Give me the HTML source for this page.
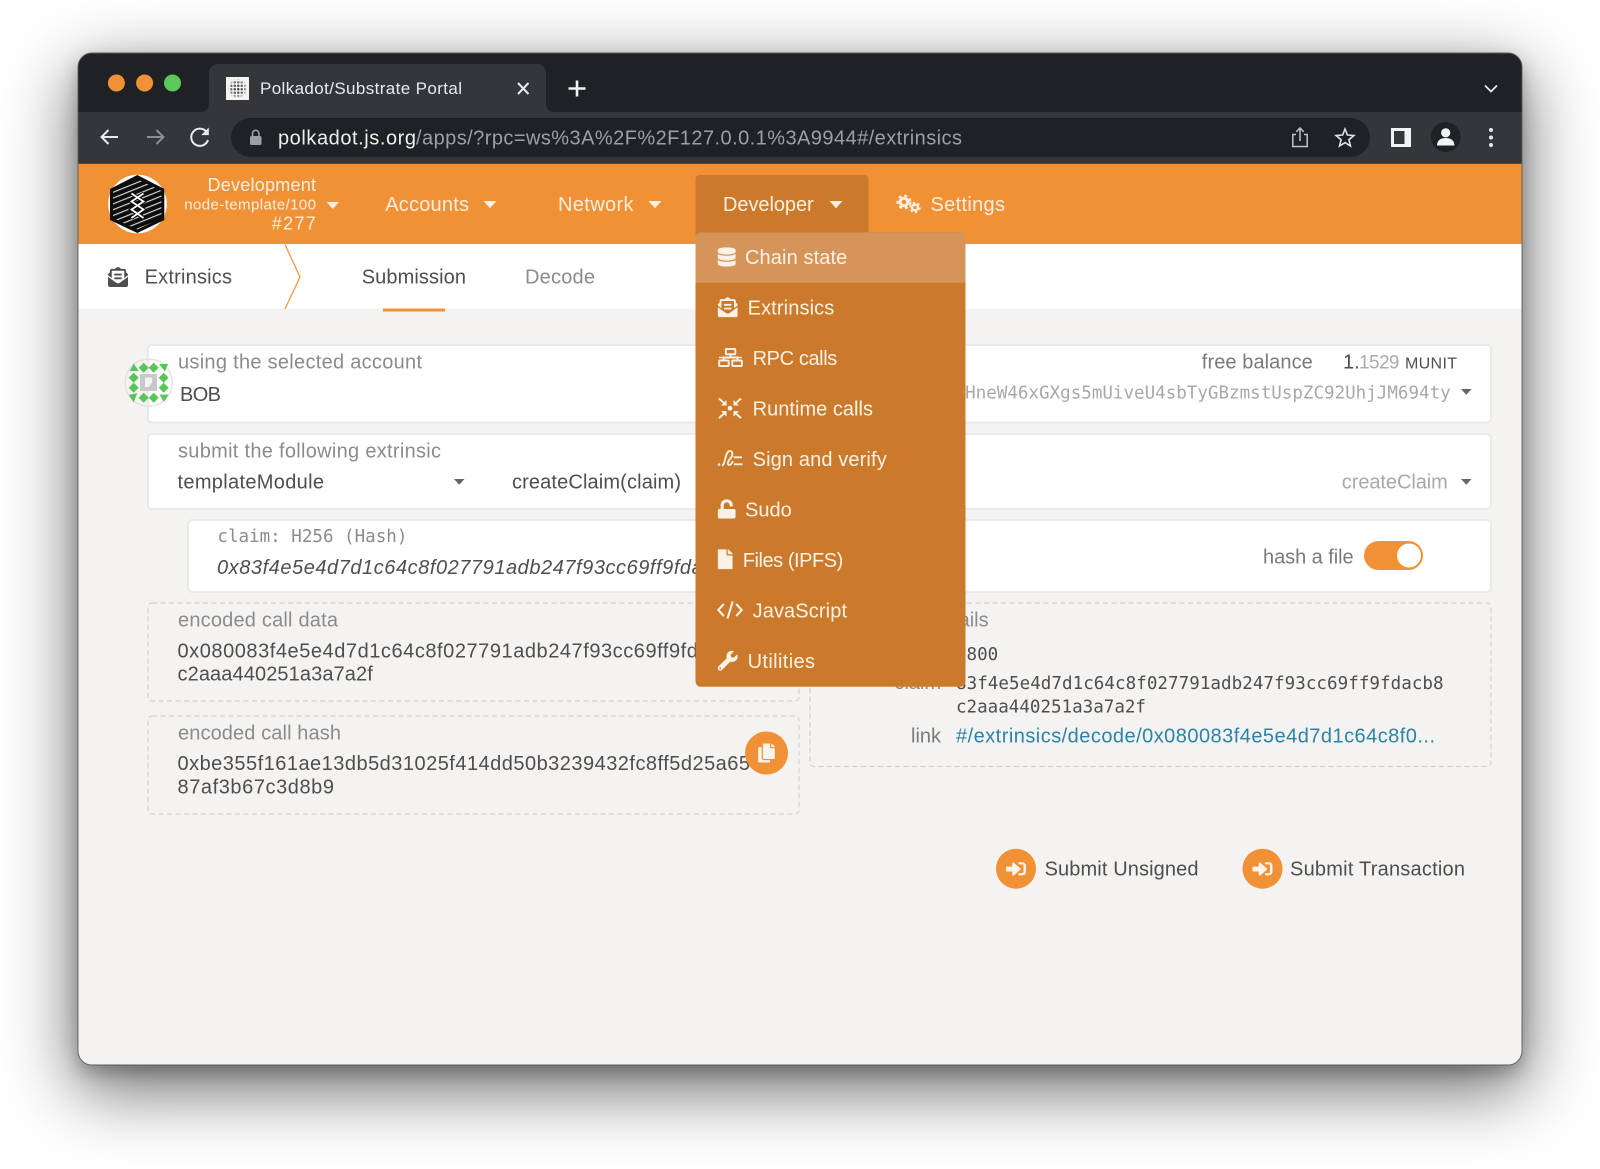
<!DOCTYPE html>
<html lang="en">
<head>
<meta charset="utf-8">
<title>Polkadot/Substrate Portal</title>
<style>
html,body{margin:0;padding:0;background:#fff;width:1600px;height:1169px;overflow:hidden}
#win{position:absolute;left:78px;top:53px;width:1444px;height:1012px;border-radius:14px;background:#f4f3f2;box-shadow:0 22px 70px 4px rgba(0,0,0,.56),0 8px 18px rgba(0,0,0,.25)}
svg#page{position:absolute;left:0;top:0;display:block}
text{font-family:"Liberation Sans",sans-serif;font-size:20px;fill:#4e4e4e}
.l{fill:#8b8b8b}
.m{font-family:"DejaVu Sans Mono",monospace;font-size:17.55px}
.h{fill:#fbeee0}
.w{fill:#fbf1e6}
</style>
</head>
<body>
<div id="win"></div>
<svg id="page" width="1600" height="1169" viewBox="0 0 1600 1169" xmlns="http://www.w3.org/2000/svg">
<defs>
<clipPath id="wc"><rect x="78" y="53" width="1444" height="1012" rx="14"/></clipPath>
<clipPath id="hex"><path d="M137.300 179L161.500 191V218L137.300 229.500L113 218V191Z"/></clipPath>
<clipPath id="mc"><rect x="695.500" y="232.300" width="270" height="454.400" rx="5"/></clipPath>
<pattern id="dots" width="3.500" height="3.500" patternUnits="userSpaceOnUse" x="226" y="77"><circle cx="1.750" cy="1.750" r="1.250" fill="#333"/></pattern>
<radialGradient id="fade" gradientUnits="userSpaceOnUse" cx="237.500" cy="88.500" r="10"><stop offset="0" stop-color="#f4f4f4" stop-opacity="0"/><stop offset=".7" stop-color="#f4f4f4" stop-opacity=".35"/><stop offset="1" stop-color="#f4f4f4" stop-opacity="1"/></radialGradient>
<pattern id="stripes" width="12" height="5.400" patternUnits="userSpaceOnUse" patternTransform="rotate(-22 137 204)"><rect width="12" height="1.150" fill="#d8d8d8"/></pattern>
</defs>

<g clip-path="url(#wc)">
<rect x="78" y="53" width="1444" height="59" fill="#202124"/>
<rect x="78" y="112" width="1444" height="51" fill="#35363a"/>
<rect x="78" y="163" width="1444" height="1" fill="#4a4b4e"/>
<rect x="78" y="164" width="1444" height="80" fill="#f19135"/>
<rect x="78" y="244" width="1444" height="65" fill="#fff"/>
<rect x="78" y="309" width="1444" height="756" fill="#f4f3f2"/>
</g>
<rect x="78" y="53" width="1444" height="1012" rx="14" fill="none" stroke="#5c5c5c" stroke-width=".9"/>

<!-- traffic lights -->
<circle cx="116.400" cy="83" r="8.500" fill="#f19135"/>
<circle cx="144.600" cy="83" r="8.500" fill="#f19135"/>
<circle cx="172.500" cy="83" r="8.500" fill="#5ac85a"/>

<!-- tab -->
<path d="M200 112c6 0 9-3 9-9V73c0-5 4-9 9-9h319c5 0 9 4 9 9v30c0 6 3 9 9 9z" fill="#35363a"/>
<rect x="226" y="77" width="23" height="23" fill="#f4f4f4"/>
<rect x="227.500" y="78.500" width="20" height="20" fill="url(#dots)"/>
<rect x="226" y="77" width="23" height="23" fill="url(#fade)"/>
<text x="260" y="94" style="font-size:17px;fill:#e8eaed" textLength="202">Polkadot/Substrate Portal</text>
<path d="M518 83l10.500 11M528.500 83L518 94" stroke="#e8eaed" stroke-width="2" fill="none"/>
<path d="M577 80.500v16M568.500 88.500h17" stroke="#f1f3f4" stroke-width="2.600" fill="none"/>
<path d="M1485 85.500l6 6 6-6" stroke="#e8eaed" stroke-width="1.800" fill="none"/>

<!-- toolbar -->
<path d="M118 137H102M108.500 130l-7 7 7 7" stroke="#e8eaed" stroke-width="2" fill="none"/>
<path d="M163 137H147M156.500 130l7 7-7 7" stroke="#8a8d91" stroke-width="2" fill="none"/>
<path d="M206.500 131.800A8.600 8.600 0 1 0 208 140" stroke="#e8eaed" stroke-width="2" fill="none"/>
<path d="M208.800 127.500v7.600h-7.600z" fill="#e8eaed"/>
<rect x="231" y="118" width="1139" height="39" rx="19.500" fill="#202124"/>
<rect x="250" y="136" width="11.500" height="9" rx="1.500" fill="#9aa0a6"/>
<path d="M252.500 136v-2.500a3.200 3.200 0 0 1 6.400 0V136" stroke="#9aa0a6" stroke-width="1.600" fill="none"/>
<text x="278" y="144.500" style="fill:#eceef0" textLength="138">polkadot.js.org</text>
<text x="416" y="144.500" style="fill:#9aa0a6" textLength="546">/apps/?rpc=ws%3A%2F%2F127.0.0.1%3A9944#/extrinsics</text>
<path d="M1296 134.500h-3.200v12h14.400v-12H1304M1300 141v-12.500M1296.300 131.800l3.700-3.800 3.700 3.800" stroke="#bdc1c6" stroke-width="1.500" fill="none"/>
<path d="M1345 129l2.400 6 6.500.5-5 4.200 1.600 6.300-5.500-3.400-5.500 3.400 1.600-6.300-5-4.200 6.500-.5z" stroke="#dfe1e5" stroke-width="1.600" fill="none"/>
<rect x="1391" y="128" width="20" height="19" fill="#f1f3f4"/>
<rect x="1394" y="131" width="10.500" height="13" fill="#35363a"/>
<circle cx="1445.700" cy="137" r="15" fill="#202124"/>
<circle cx="1445.700" cy="132.800" r="4.600" fill="#f1f3f4"/>
<path d="M1437 145.500c0-5 3.500-7.500 8.700-7.500s8.700 2.500 8.700 7.500z" fill="#f1f3f4"/>
<circle cx="1491" cy="130" r="2" fill="#e8eaed"/><circle cx="1491" cy="137.500" r="2" fill="#e8eaed"/><circle cx="1491" cy="145" r="2" fill="#e8eaed"/>

<!-- logo -->
<circle cx="137.500" cy="204" r="29.300" fill="#fff"/>
<path d="M137.300 175L164.300 189V220L137.300 233L110 220V189Z" fill="#0d0d0d"/>
<rect x="105" y="170" width="65" height="68" fill="url(#stripes)" clip-path="url(#hex)"/>
<path d="M131.500 193.500L143.500 201.500 131.500 209.500 143.500 218M143.500 193.500L131.500 201.500 143.500 209.500 131.500 218" stroke="#0d0d0d" stroke-width="4" fill="none"/>
<path d="M131.500 193.500L143.500 201.500 131.500 209.500 143.500 218M143.500 193.500L131.500 201.500 143.500 209.500 131.500 218" stroke="#fff" stroke-width="1.800" fill="none"/>

<!-- header -->
<text class="h" x="207.500" y="191" style="font-size:18px" textLength="108.500">Development</text>
<text class="h" x="184.300" y="209.300" style="font-size:15px" textLength="131.700">node-template/100</text>
<text class="h" x="271.800" y="229.300" style="font-size:18px" textLength="44">#277</text>
<path d="M326.500 202h12.500l-6.200 7z" fill="#fbeee0"/>
<text class="h" x="385.200" y="211" textLength="83.800">Accounts</text>
<path d="M483.500 201h13l-6.500 7.300z" fill="#fbeee0"/>
<text class="h" x="558" y="211" textLength="75.500">Network</text>
<path d="M648.500 201h13l-6.500 7.300z" fill="#fbeee0"/>
<path d="M695.500 244V179a4 4 0 0 1 4-4h165a4 4 0 0 1 4 4V244z" fill="#cb7a2b"/>
<text class="h" x="723" y="211" textLength="90.700">Developer</text>
<path d="M829.500 201h13l-6.500 7.300z" fill="#fbeee0"/>
<g fill="none" stroke="#fbeee0">
<circle cx="904" cy="202" r="3.800" stroke-width="3"/>
<circle cx="904" cy="202" r="6.300" stroke-width="2.400" stroke-dasharray="3 2.950"/>
<circle cx="915" cy="207.500" r="2.900" stroke-width="2.400"/>
<circle cx="915" cy="207.500" r="4.700" stroke-width="2" stroke-dasharray="2.400 2.520"/>
</g>
<text class="h" x="930.500" y="211" textLength="74.500">Settings</text>

<!-- sub nav -->
<svg x="108" y="267" width="20" height="20" viewBox="0 0 512 512"><path fill="#4e4e4e" d="M176 216h160c8.840 0 16-7.160 16-16v-16c0-8.840-7.160-16-16-16H176c-8.840 0-16 7.160-16 16v16c0 8.840 7.160 16 16 16zm-16 80c0 8.840 7.160 16 16 16h160c8.840 0 16-7.160 16-16v-16c0-8.840-7.160-16-16-16H176c-8.840 0-16 7.160-16 16v16zm96 121.130c-16.420 0-32.840-5.060-46.860-15.190L0 250.860V464c0 26.510 21.490 48 48 48h416c26.510 0 48-21.490 48-48V250.860L302.860 401.940c-14.020 10.120-30.440 15.190-46.860 15.190zm237.610-254.180c-8.850-6.940-17.240-13.470-29.610-22.810V96c0-26.510-21.490-48-48-48h-77.550c-3.040-2.200-5.870-4.260-9.040-6.560C312.600 29.170 279.200-.35 256 0c-23.200-.35-56.590 29.170-73.410 41.440-3.170 2.300-6 4.360-9.040 6.560H96c-26.510 0-48 21.490-48 48v44.140c-12.370 9.330-20.760 15.870-29.610 22.810A47.995 47.995 0 0 0 0 200.720v10.650l96 69.350V96h320v184.720l96-69.350v-10.650c0-14.740-6.780-28.670-18.390-37.770z"/></svg>
<text x="144.600" y="283.500" textLength="87.400">Extrinsics</text>
<path d="M285 244.500L300 277 285 309" fill="none" stroke="#f19135" stroke-width="1.200"/>
<text x="361.700" y="283.500" textLength="104.300">Submission</text>
<text class="l" x="525" y="283.500" textLength="70">Decode</text>
<rect x="383" y="308.500" width="62" height="3" fill="#f19135"/>

<!-- cards -->
<g fill="#fff" stroke="#e8e8e7" stroke-width="1.800">
<rect x="148" y="345" width="1343" height="77.500" rx="4"/>
<rect x="148" y="434" width="1343" height="75" rx="4"/>
<rect x="188" y="520" width="1303" height="72" rx="4"/>
</g>
<g fill="none" stroke="#d2d2d2" stroke-width="1.200" stroke-dasharray="5 3.500">
<rect x="148" y="603" width="651" height="98" rx="4"/>
<rect x="148" y="716" width="651" height="98" rx="4"/>
<rect x="810" y="603" width="681" height="163.500" rx="4"/>
</g>

<!-- identicon -->
<circle cx="148.700" cy="382.700" r="23.500" fill="none" stroke="#e0e0e0" stroke-width="1.300"/>
<rect x="140" y="374" width="17" height="17" fill="#c9c9c9"/>
<path d="M145 377.500h7v5l-3 4.500h-4z" fill="#f4f4f4"/>
<path fill="#58c558" d="M143.700 362.700l5 5-5 5-5-5zM153.700 362.700l5 5-5 5-5-5zM143.700 392.700l5 5-5 5-5-5zM153.700 392.700l5 5-5 5-5-5zM133.700 372.700l5 5-5 5-5-5zM133.700 382.700l5 5-5 5-5-5zM163.700 372.700l5 5-5 5-5-5zM163.700 382.700l5 5-5 5-5-5zM133.700 363.500l5 7.500h-9zM159 364h9l-3 7.500zM133.700 402.500l-5-7.500 8.500-2zM164 402l4.500-7.500h-9z"/>

<!-- left content -->
<text class="l" x="178" y="368.500" textLength="244">using the selected account</text>
<text x="180" y="401" textLength="41">BOB</text>
<text class="l" x="178" y="457.500" textLength="263">submit the following extrinsic</text>
<text x="177.500" y="488.300" textLength="146.500">templateModule</text>
<path d="M454 479h10.500l-5.200 5.800z" fill="#666"/>
<text x="512" y="488.300" textLength="169">createClaim(claim)</text>
<text class="l m" x="217.400" y="542">claim: H256 (Hash)</text>
<text x="217" y="573.800" font-style="italic" style="letter-spacing:.55px">0x83f4e5e4d7d1c64c8f027791adb247f93cc69ff9fdacb8c2aaa440251a3a7a2f</text>
<text class="l" x="178" y="626.700" textLength="160">encoded call data</text>
<text x="177.500" y="657.700" style="letter-spacing:.55px">0x080083f4e5e4d7d1c64c8f027791adb247f93cc69ff9fdacb8</text>
<text x="177.500" y="680.700" textLength="195.300">c2aaa440251a3a7a2f</text>
<text class="l" x="178" y="739.300" textLength="163">encoded call hash</text>
<text x="177.500" y="770" textLength="572.500">0xbe355f161ae13db5d31025f414dd50b3239432fc8ff5d25a65</text>
<text x="177.500" y="793.300" textLength="156.500">87af3b67c3d8b9</text>

<!-- copy button -->
<circle cx="766.500" cy="753" r="21.500" fill="#f19135"/>
<svg x="758" y="743.500" width="17" height="19" viewBox="0 0 448 512"><path fill="#f8f4ee" d="M320 448v40c0 13.255-10.745 24-24 24H24c-13.255 0-24-10.745-24-24V120c0-13.255 10.745-24 24-24h72v296c0 30.879 25.121 56 56 56h168zm0-344V0H152c-13.255 0-24 10.745-24 24v368c0 13.255 10.745 24 24 24h272c13.255 0 24-10.745 24-24V128H344c-13.200 0-24-10.800-24-24zm120.971-31.029L375.029 7.029A24 24 0 0 0 358.059 0H352v96h96v-6.059a24 24 0 0 0-7.029-16.970z"/></svg>

<!-- right content -->
<text x="1201.800" y="368.500" style="fill:#7a7a7a" textLength="111">free balance</text>
<text x="1343" y="368.500">1.</text>
<text x="1359" y="368.500" style="fill:#ababab;font-size:19px" textLength="40.500">1529</text>
<text x="1405" y="368.500" style="font-size:16px" textLength="52">MUNIT</text>
<text class="m" x="1450.700" y="398.300" text-anchor="end" style="fill:#a8a8a8">5FHneW46xGXgs5mUiveU4sbTyGBzmstUspZC92UhjJM694ty</text>
<path d="M1461 389h10.500l-5.200 5.800z" fill="#666"/>
<text x="1341.800" y="488.300" style="fill:#a8a8a8" textLength="106">createClaim</text>
<path d="M1461 479h10.500l-5.200 5.800z" fill="#666"/>
<text x="1263" y="563.300" style="fill:#7a7a7a" textLength="90.600">hash a file</text>
<rect x="1364" y="541" width="59" height="29" rx="14.500" fill="#f19135"/>
<circle cx="1409" cy="555.500" r="12" fill="#fff"/>
<text class="l" x="988.600" y="626.700" text-anchor="end">call details</text>
<text class="m" x="956" y="660">0800</text>
<text class="l" x="941" y="689" text-anchor="end">claim</text>
<text class="m" x="956" y="689" textLength="487.600">83f4e5e4d7d1c64c8f027791adb247f93cc69ff9fdacb8</text>
<text class="m" x="956" y="712.300">c2aaa440251a3a7a2f</text>
<text x="911" y="742.300" style="fill:#7a7a7a" textLength="30">link</text>
<text x="956" y="742.300" style="fill:#2b83a8" textLength="479">#/extrinsics/decode/0x080083f4e5e4d7d1c64c8f0...</text>

<!-- submit buttons -->
<circle cx="1016" cy="868.700" r="20" fill="#f19135"/>
<svg x="1006" y="860" width="20" height="17.500" viewBox="0 0 512 512" preserveAspectRatio="none"><path fill="#f8f4ee" d="M416 448h-84c-6.600 0-12-5.400-12-12v-40c0-6.600 5.400-12 12-12h84c17.700 0 32-14.300 32-32V160c0-17.700-14.300-32-32-32h-84c-6.600 0-12-5.400-12-12V76c0-6.600 5.400-12 12-12h84c53 0 96 43 96 96v192c0 53-43 96-96 96zm-47-201L201 79c-15-15-41-4.500-41 17v96H24c-13.300 0-24 10.700-24 24v96c0 13.300 10.700 24 24 24h136v96c0 21.500 26 32 41 17l168-168c9.300-9.400 9.300-24.600 0-34z"/></svg>
<text x="1044.600" y="875.300" textLength="153.900">Submit Unsigned</text>
<circle cx="1262.500" cy="868.700" r="20" fill="#f19135"/>
<svg x="1252.500" y="860" width="20" height="17.500" viewBox="0 0 512 512" preserveAspectRatio="none"><path fill="#f8f4ee" d="M416 448h-84c-6.600 0-12-5.400-12-12v-40c0-6.600 5.400-12 12-12h84c17.700 0 32-14.300 32-32V160c0-17.700-14.300-32-32-32h-84c-6.600 0-12-5.400-12-12V76c0-6.600 5.400-12 12-12h84c53 0 96 43 96 96v192c0 53-43 96-96 96zm-47-201L201 79c-15-15-41-4.500-41 17v96H24c-13.300 0-24 10.700-24 24v96c0 13.300 10.700 24 24 24h136v96c0 21.500 26 32 41 17l168-168c9.300-9.400 9.300-24.600 0-34z"/></svg>
<text x="1290" y="875.300" textLength="175">Submit Transaction</text>

<!-- dropdown -->
<rect x="695.500" y="232.300" width="270" height="454.400" rx="5" fill="#cb7a2b"/>
<rect x="695.500" y="232.300" width="270" height="50.400" fill="#d5955a" clip-path="url(#mc)"/>

<svg x="717.700" y="247.300" width="18" height="19.300" viewBox="0 0 448 512" preserveAspectRatio="none"><path fill="#fbf1e6" d="M448 73.143v45.714C448 159.143 347.667 192 224 192S0 159.143 0 118.857V73.143C0 32.857 100.333 0 224 0s224 32.857 224 73.143zM448 176v102.857C448 319.143 347.667 352 224 352S0 319.143 0 278.857V176c48.125 33.143 136.208 48.572 224 48.572S399.874 209.143 448 176zm0 160v102.857C448 479.143 347.667 512 224 512S0 479.143 0 438.857V336c48.125 33.143 136.208 48.572 224 48.572S399.874 369.143 448 336z"/></svg>
<text class="w" x="745" y="264" textLength="102.300">Chain state</text>

<svg x="717.700" y="297.300" width="20" height="20" viewBox="0 0 512 512"><path fill="#fbf1e6" d="M176 216h160c8.840 0 16-7.160 16-16v-16c0-8.840-7.160-16-16-16H176c-8.840 0-16 7.160-16 16v16c0 8.840 7.160 16 16 16zm-16 80c0 8.840 7.160 16 16 16h160c8.840 0 16-7.160 16-16v-16c0-8.840-7.160-16-16-16H176c-8.840 0-16 7.160-16 16v16zm96 121.130c-16.420 0-32.840-5.060-46.860-15.190L0 250.860V464c0 26.510 21.490 48 48 48h416c26.510 0 48-21.490 48-48V250.860L302.860 401.940c-14.020 10.120-30.440 15.190-46.860 15.190zm237.610-254.180c-8.850-6.940-17.240-13.470-29.610-22.810V96c0-26.510-21.490-48-48-48h-77.550c-3.040-2.200-5.870-4.260-9.040-6.560C312.600 29.170 279.200-.35 256 0c-23.200-.35-56.590 29.170-73.410 41.440-3.170 2.300-6 4.360-9.040 6.560H96c-26.510 0-48 21.490-48 48v44.140c-12.370 9.330-20.760 15.870-29.610 22.810A47.995 47.995 0 0 0 0 200.720v10.650l96 69.350V96h320v184.720l96-69.350v-10.650c0-14.740-6.780-28.670-18.390-37.770z"/></svg>
<text class="w" x="747.600" y="314.500" textLength="86.700">Extrinsics</text>

<g fill="none" stroke="#fbf1e6" stroke-width="1.900">
<rect x="725.800" y="349" width="9.500" height="5.300" rx=".6"/>
<path d="M730.500 354.300v3M723.500 360.500v-3h14v3"/>
<path d="M719 357.500h23" stroke-width="1.600"/>
<rect x="719.200" y="360.500" width="9.500" height="5.500" rx=".6"/>
<rect x="732.300" y="360.500" width="9.500" height="5.500" rx=".6"/>
</g>
<text class="w" x="752.600" y="365" textLength="84.700">RPC calls</text>

<path fill="#fbf1e6" d="M726.500 405.500V400L721 405.500zM733.500 405.500V400L739 405.500zM726.500 411.100V416.600L721 411.100zM733.500 411.100V416.600L739 411.100z"/>
<path fill="none" stroke="#fbf1e6" stroke-width="2" d="M719 398.500l4.700 4.200M741 398.500l-4.700 4.200M719 418.100l4.700-4.200M741 418.100l-4.700-4.200"/>
<circle cx="730" cy="408.300" r="2.400" fill="#fbf1e6"/>
<text class="w" x="752.600" y="415.700" textLength="120.400">Runtime calls</text>

<circle cx="719" cy="464.500" r="1.300" fill="#fbf1e6"/>
<path d="M722 465.500C725.500 465 725 451.500 729.500 451C733.500 450.500 733 456 730 459C727.500 461.500 727 465 729.500 465C731 465 732 463 733 461" fill="none" stroke="#fbf1e6" stroke-width="1.800"/>
<path d="M733.500 457.300h8.500M734 464.300h8.500" fill="none" stroke="#fbf1e6" stroke-width="1.900"/>
<text class="w" x="752.600" y="466.200" textLength="134.100">Sign and verify</text>

<svg x="717.700" y="499.300" width="18" height="19.300" viewBox="0 0 448 512" preserveAspectRatio="none"><path fill="#fbf1e6" d="M400 256H152V152.900c0-39.600 31.700-72.500 71.300-72.900 40-.4 72.700 32.100 72.700 72v16c0 13.300 10.700 24 24 24h32c13.300 0 24-10.700 24-24v-16C376 68 307.500-.3 223.500 0 139.500.3 72 69.500 72 153.500V256H48c-26.500 0-48 21.500-48 48v160c0 26.500 21.500 48 48 48h352c26.500 0 48-21.500 48-48V304c0-26.500-21.500-48-48-48z"/></svg>
<text class="w" x="745" y="516.700" textLength="46.700">Sudo</text>

<svg x="717.700" y="549.300" width="15" height="20" viewBox="0 0 384 512"><path fill="#fbf1e6" d="M224 136V0H24C10.700 0 0 10.700 0 24v464c0 13.300 10.700 24 24 24h336c13.300 0 24-10.700 24-24V160H248c-13.200 0-24-10.800-24-24zm160-14.100v6.100H256V0h6.100c6.400 0 12.500 2.500 17 7l97.900 98c4.500 4.500 7 10.600 7 16.900z"/></svg>
<text class="w" x="742.800" y="567.200" textLength="100.500">Files (IPFS)</text>

<path d="M723.800 604l-5.500 6 5.500 6M736.200 604l5.500 6-5.500 6M732.700 601.500l-5.200 17" fill="none" stroke="#fbf1e6" stroke-width="2.100"/>
<text class="w" x="752.600" y="617.700" textLength="94.400">JavaScript</text>

<svg x="717.700" y="650.700" width="20" height="20" viewBox="0 0 512 512"><path fill="#fbf1e6" d="M507.730 109.100c-2.240-9.030-13.540-12.090-20.120-5.510l-74.360 74.360-67.880-11.310-11.310-67.880 74.360-74.360c6.620-6.620 3.430-17.900-5.660-20.160-47.380-11.740-99.550.91-136.580 37.930-39.640 39.640-50.550 97.100-34.050 147.200L18.740 402.760c-24.990 24.990-24.990 65.510 0 90.500 24.990 24.990 65.510 24.990 90.500 0l213.210-213.210c50.120 16.710 107.470 5.680 147.370-34.220 37.070-37.070 49.700-89.320 37.910-136.730zM64 472c-13.250 0-24-10.750-24-24 0-13.260 10.750-24 24-24s24 10.740 24 24c0 13.250-10.750 24-24 24z"/></svg>
<text class="w" x="747.600" y="668" textLength="67.400">Utilities</text>
</svg>
</body>
</html>
